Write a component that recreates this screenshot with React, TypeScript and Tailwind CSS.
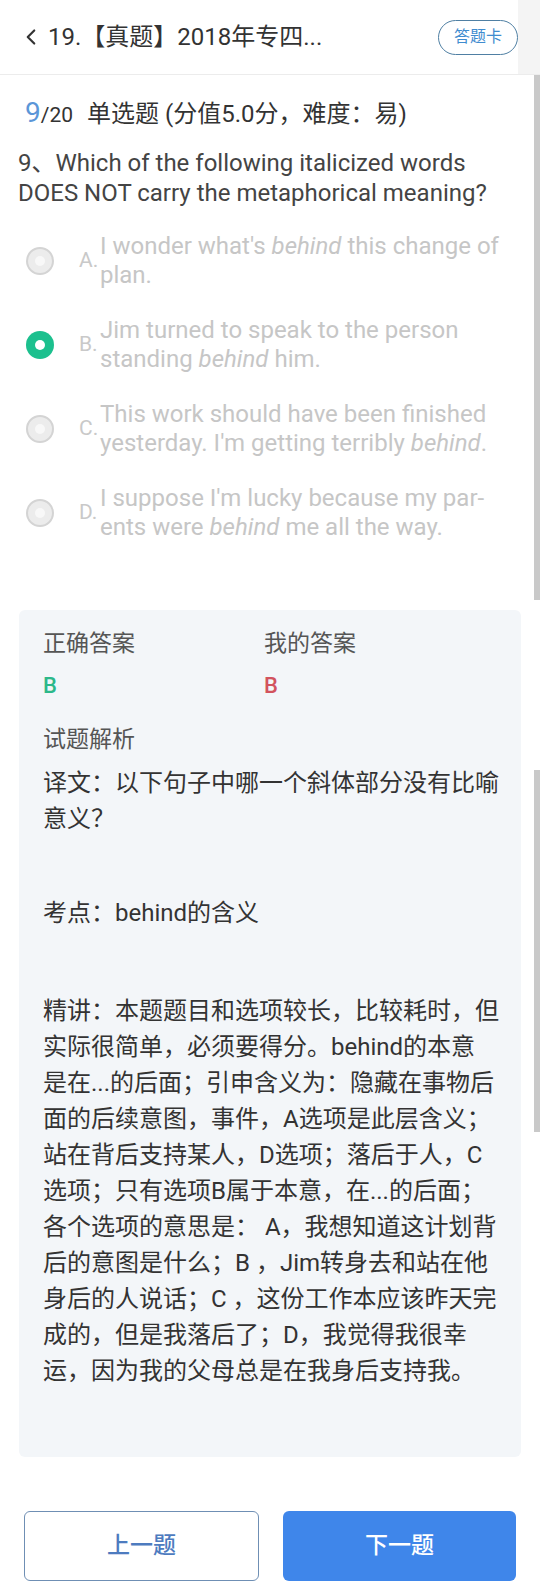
import { ChevronLeft } from 'lucide-react'

const options = [
  { key: 'A', lines: [<>I wonder what's <i>behind</i> this change of</>, <>plan.</>], selected: false },
  { key: 'B', lines: [<>Jim turned to speak to the person</>, <>standing <i>behind</i> him.</>], selected: true },
  { key: 'C', lines: [<>This work should have been finished</>, <>yesterday. I'm getting terribly <i>behind</i>.</>], selected: false },
  { key: 'D', lines: [<>I suppose I'm lucky because my par-</>, <>ents were <i>behind</i> me all the way.</>], selected: false },
]

const explain = [
  '精讲：本题题目和选项较长，比较耗时，但',
  '实际很简单，必须要得分。behind的本意',
  '是在...的后面；引申含义为：隐藏在事物后',
  '面的后续意图，事件，A选项是此层含义；',
  '站在背后支持某人，D选项；落后于人，C',
  '选项；只有选项B属于本意，在...的后面；',
  '各个选项的意思是： A，我想知道这计划背',
  '后的意图是什么；B ，Jim转身去和站在他',
  '身后的人说话；C ，这份工作本应该昨天完',
  '成的，但是我落后了；D，我觉得我很幸',
  '运，因为我的父母总是在我身后支持我。',
]

function Radio({ selected }: { selected: boolean }) {
  if (selected) {
    return (
      <div className="w-[28px] h-[28px] rounded-full bg-[#1cc08e] flex items-center justify-center">
        <div className="w-[10px] h-[10px] rounded-full bg-white" />
      </div>
    )
  }
  return (
    <div className="w-[28px] h-[28px] rounded-full border-2 border-[#d4d4d4] bg-[#ececec] flex items-center justify-center">
      <div className="w-[10px] h-[10px] rounded-full bg-[#f8f8f8]" />
    </div>
  )
}

export default function App() {
  return (
    <div className="relative w-[540px] h-[1582px] bg-white overflow-hidden font-['Roboto','Noto_Sans_CJK_SC',sans-serif] text-[#333]">
      {/* header */}
      <div className="flex items-center h-[75px] border-b border-[#ececec] pl-[18px] pr-[22px]">
        <ChevronLeft className="w-[26px] h-[26px] text-[#333]" strokeWidth={2} />
        <div className="ml-[4px] text-[24px] leading-none text-[#333] whitespace-nowrap">19.【真题】2018年专四...</div>
        <div className="ml-auto w-[80px] h-[35px] rounded-full border-[1.5px] border-[#4f7fa3] flex items-center justify-center text-[16px] text-[#3f8ccf]">
          答题卡
        </div>
      </div>

      {/* question head */}
      <div className="mt-[24px] pl-[25px] flex items-baseline h-[32px] whitespace-nowrap">
        <span className="text-[28px] text-[#5b96d8] leading-none">9</span>
        <span className="text-[21px] text-[#333] leading-none">/20</span>
        <span className="ml-[14px] text-[24px] text-[#333] leading-none">单选题 (分值5.0分，难度：易)</span>
      </div>

      <div className="mt-[17px] pl-[18px] pr-[10px] text-[24px] leading-[30px] text-[#444] whitespace-nowrap">
        <div>9、Which of the following italicized words</div>
        <div>DOES NOT carry the metaphorical meaning?</div>
      </div>

      {/* options */}
      <div className="mt-[24px] flex flex-col gap-[26px]">
        {options.map(o => (
          <div key={o.key} className="flex items-center">
            <div className="w-[80px] flex justify-center">
              <Radio selected={o.selected} />
            </div>
            <div className="w-[21px] text-[21px] text-[#c9c9c9] -ml-[1px]">{o.key}.</div>
            <div className="text-[24px] leading-[29px] text-[#c6c6c6] whitespace-nowrap">
              {o.lines.map((l, i) => (
                <div key={i}>{l}</div>
              ))}
            </div>
          </div>
        ))}
      </div>

      {/* analysis card */}
      <div className="mt-[68px] ml-[19px] w-[502px] rounded-md bg-[#f3f6f9] pt-[19px] pb-[68px] px-[24px]">
        <div className="grid grid-cols-[221px_1fr] text-[23px] leading-[30px] text-[#555]">
          <div>正确答案</div>
          <div>我的答案</div>
          <div className="mt-[12px] text-[22px] font-medium text-[#2cb88a]">B</div>
          <div className="mt-[12px] text-[22px] font-medium text-[#d2535e]">B</div>
        </div>
        <div className="mt-[24px] text-[23px] leading-[30px] text-[#555]">试题解析</div>
        <div className="mt-[10px] text-[24px] leading-[36px] text-[#333] whitespace-nowrap">
          <div>译文：以下句子中哪一个斜体部分没有比喻</div>
          <div>意义？</div>
          <div className="mt-[58px]">考点：behind的含义</div>
          <div className="mt-[62px]">
            {explain.map((l, i) => (
              <div key={i}>{l}</div>
            ))}
          </div>
        </div>
      </div>

      {/* buttons */}
      <div className="mt-[54px] px-[24px] flex gap-[24px]">
        <div className="flex-1 h-[70px] rounded-md border border-[#6f8fb4] flex items-center justify-center text-[23px] font-medium text-[#4d7bbf]">
          上一题
        </div>
        <div className="flex-1 h-[70px] rounded-md bg-[#3f86ea] flex items-center justify-center text-[23px] font-medium text-white">
          下一题
        </div>
      </div>

      {/* right edge strips */}
      <div className="absolute right-0 top-0 w-[22px] h-[74px] bg-[#f4f4f4]" />
      <div className="absolute right-0 top-[75px] w-[6px] h-[525px] bg-[#c9c9c9]" />
      <div className="absolute right-0 top-[770px] w-[6px] h-[362px] bg-[#c9c9c9]" />
    </div>
  )
}
